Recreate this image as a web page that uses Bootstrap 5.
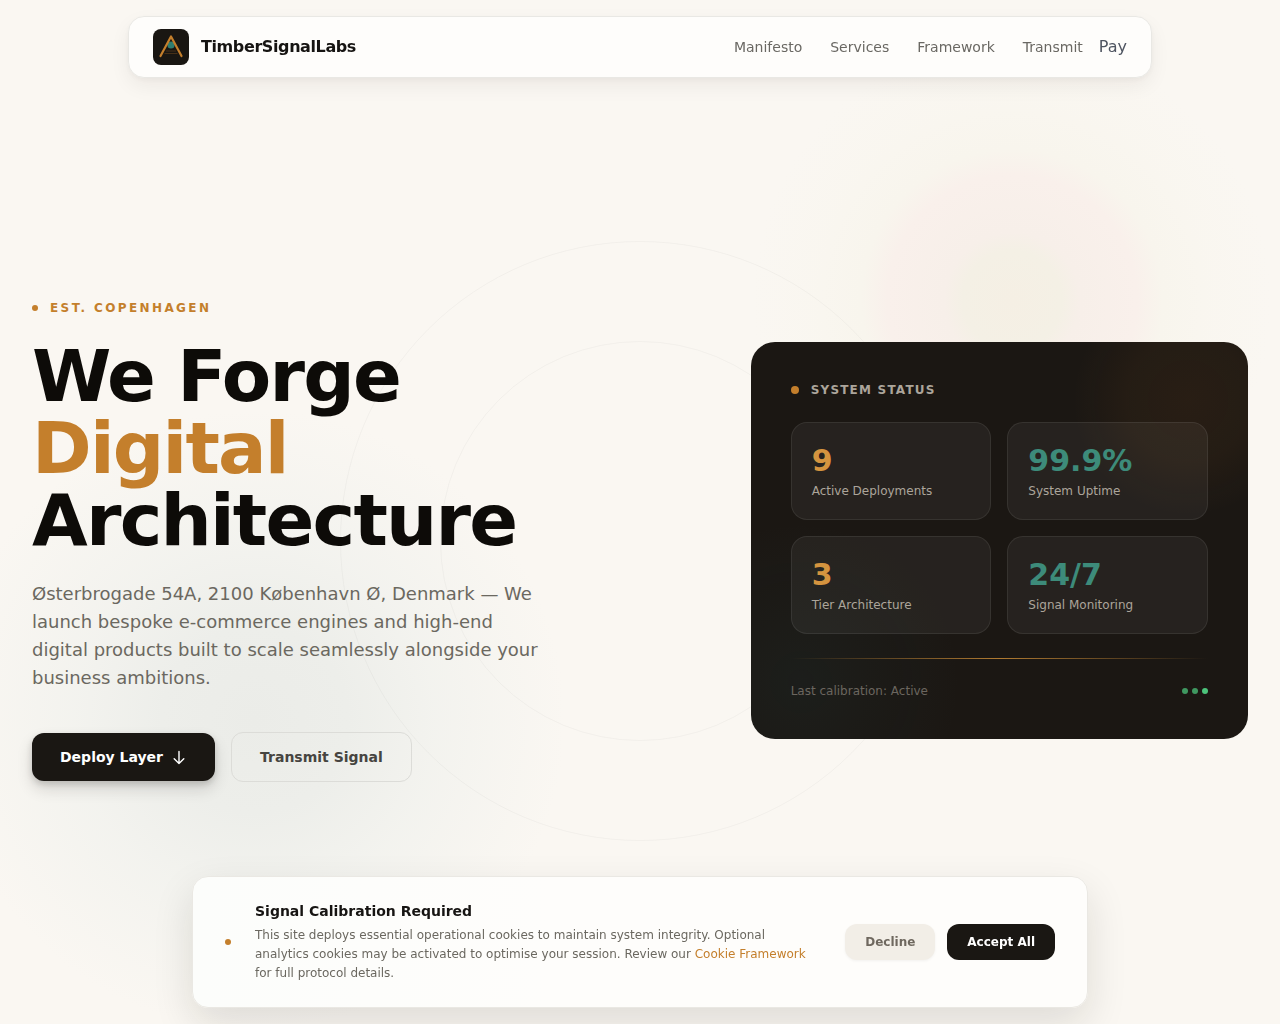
<!DOCTYPE html>
<html lang="en">
<head>
<meta charset="utf-8">
<meta name="viewport" content="width=device-width, initial-scale=1">
<title>TimberSignalLabs</title>
<link href="https://cdn.jsdelivr.net/npm/bootstrap@5.3.0/dist/css/bootstrap.min.css" rel="stylesheet">
<style>
  :root { --ink: #1a1612; --copper: #c47f2c; --cream: #faf7f2; --stone: #6b6860; }
  body { font-family: "DejaVu Sans", sans-serif; background: var(--cream); color: var(--stone); }
  .fs-12 { font-size: 12px; line-height: 16px; }
  .fs-14 { font-size: 14px; line-height: 20px; }
  .gap-12 { gap: 12px; }
  .dot-6 { width: 6px; height: 6px; border-radius: 50%; flex: none; background: var(--copper); }
  .dot-8 { width: 8px; height: 8px; border-radius: 50%; flex: none; background: var(--copper); }

  .site-bar { max-width: 1024px; padding: 12px 24px; background: #fefdfb; border: 1px solid #e9e8e4; border-radius: 16px; box-shadow: 0 8px 20px rgba(26,22,18,.06), 0 2px 6px rgba(26,22,18,.04); }
  .brand-name { color: #161412; font-size: 16px; line-height: 24px; letter-spacing: -.025em; }
  .site-links { gap: 28px; }
  .site-links a, .pay-link { color: #6a6863; text-decoration: none; }
  .pay-link { color: #4f5561; font-size: 16px; line-height: 24px; }

  .hero { padding: 57px 24px 0; overflow: hidden; }
  .glow, .ring { position: absolute; border-radius: 50%; pointer-events: none; }
  .glow-warm { width: 520px; height: 520px; right: 8px; top: 40px; background: radial-gradient(closest-side, #f5efe4 0, #f4f0e5 19%, #f7efe9 26%, #f9f0eb 48%, #f8f5ed 58%, rgba(249,246,239,.7) 78%, rgba(250,247,242,0) 100%); }
  .glow-cool { width: 620px; height: 620px; left: -55px; top: 410px; background: radial-gradient(closest-side, #ebece8 0, #edeeea 30%, rgba(240,241,237,.7) 58%, rgba(250,247,242,0) 100%); }
  .ring { left: 50%; top: 50%; transform: translate(-50%, -50%); border: 1px solid rgba(26,22,18,.035); }
  .ring-lg { width: 600px; height: 600px; }
  .ring-sm { width: 400px; height: 400px; }

  .eyebrow { color: var(--copper); letter-spacing: .2em; }
  .hero-title { font-size: 72px; line-height: 72px; letter-spacing: -.025em; color: #0d0b08; margin: 24px 0; }
  .hero-title span { color: var(--copper); }
  .hero-text { font-size: 18px; line-height: 28px; max-width: 512px; margin-bottom: 40px; }
  .btn-hero { padding: 14px 28px; border-radius: 12px; }
  .btn-ink { background: #1a1713; color: #fff; }
  .btn-raised { box-shadow: 0 8px 16px rgba(26,22,18,.14), 0 3px 6px rgba(26,22,18,.16); border: 0; }
  .btn-ghost { border: 1px solid #dcdcd8; color: #464440; }

  .status-panel { padding: 40px; border-radius: 24px; background:
      radial-gradient(circle 115px at 437px 58px, rgba(196,110,30,.08), rgba(196,115,40,.06) 50%, rgba(196,127,44,0)),
      radial-gradient(circle 160px at 50px 340px, rgba(45,120,130,.07), rgba(45,120,130,0)), #1b1713; }
  .status-title { color: #aca59b; letter-spacing: .1em; }
  .stat-tile { padding: 20px; border: 1px solid rgba(255,255,255,.08); border-radius: 16px; background: rgba(255,255,255,.05); }
  .stat-num { font-size: 30px; line-height: 36px; margin-bottom: 4px; }
  .num-amber { color: #d4943f; }
  .num-teal { color: #3d8b7a; }
  .stat-name { color: #aca59b; }
  .signal-line { height: 1px; margin: 24px 0; background: linear-gradient(90deg, rgba(196,127,44,0), #b07a31, rgba(196,127,44,0)); }
  .calibration { color: #6b665f; }
  .live { background: #4cc47b; }

  .consent { max-width: 896px; padding: 24px 32px; background: linear-gradient(90deg, #fcfdfb, #fefdfb 40%); border: 1px solid #eae8e3; border-radius: 16px; box-shadow: 0 16px 40px rgba(26,22,18,.12); }
  .consent-title { color: #161412; margin-bottom: 5px; }
  .consent-text { font-size: 12px; line-height: 19px; }
  .consent-text a { color: var(--copper); text-decoration: none; }
  .btn-consent { padding: 10px 20px; border-radius: 12px; border: 0; }
  .btn-soft { background: #f2eee7; color: #6f685f; box-shadow: 0 1px 3px rgba(26,22,18,.05); }
</style>
<script src="https://cdn.jsdelivr.net/npm/bootstrap@5.3.0/dist/js/bootstrap.bundle.min.js"></script>
</head>
<body>
<header class="fixed-top pt-3 px-3">
  <nav class="site-bar mx-auto d-flex align-items-center justify-content-between" aria-label="Main">
    <a href="#top" class="d-flex align-items-center gap-12 text-decoration-none">
      <svg width="36" height="36" viewBox="0 0 36 36" aria-hidden="true">
        <rect width="36" height="36" rx="8" fill="#191612"/>
        <path d="M13 22h10M11.500 24.500h13" stroke="#7a4d1d" stroke-width=".8" opacity=".6"/>
        <circle cx="18" cy="16" r="3.600" fill="#2e7d70"/>
        <path d="M7.500 27 18 7.500 28.500 27" fill="none" stroke="#c47f2c" stroke-width="2.200" stroke-linecap="round" stroke-linejoin="round"/>
      </svg>
      <span class="brand-name fw-bold">TimberSignalLabs</span>
    </a>
    <div class="d-flex align-items-center gap-3">
      <div class="site-links fs-14 d-flex">
        <a href="#manifesto">Manifesto</a>
        <a href="#services">Services</a>
        <a href="#framework">Framework</a>
        <a href="#transmit">Transmit</a>
      </div>
      <a class="pay-link" href="#pay">Pay</a>
    </div>
  </nav>
</header>

<main id="top" class="hero min-vh-100 d-flex position-relative">
  <div class="glow glow-warm"></div>
  <div class="glow glow-cool"></div>
  <div class="flex-grow-1 d-flex align-items-center position-relative">
    <div class="ring ring-lg"></div>
    <div class="ring ring-sm"></div>
    <div class="container-fluid px-2 position-relative">
      <div class="row gx-3 gy-5 align-items-center">
        <div class="col-lg-7">
          <div class="eyebrow fs-12 fw-bold d-flex align-items-center gap-12 text-uppercase"><span class="dot-6"></span><span>Est. Copenhagen</span></div>
          <h1 class="hero-title fw-bold">We Forge<br><span>Digital</span><br>Architecture</h1>
          <p class="hero-text">Østerbrogade 54A, 2100 København Ø, Denmark — We launch bespoke e-commerce engines and high-end digital products built to scale seamlessly alongside your business ambitions.</p>
          <div class="d-flex flex-wrap align-items-center gap-3">
            <button type="button" class="btn btn-hero btn-ink btn-raised fs-14 fw-bold d-inline-flex align-items-center gap-2">Deploy Layer
              <svg width="16" height="16" viewBox="0 0 16 16" fill="none" stroke="currentColor" stroke-width="1.400" stroke-linecap="round" stroke-linejoin="round" aria-hidden="true"><path d="M8 2.500v12M3.200 9.700 8 14.500l4.800-4.800"/></svg>
            </button>
            <button type="button" class="btn btn-hero btn-ghost fs-14 fw-bold">Transmit Signal</button>
          </div>
        </div>
        <div class="col-lg-5">
          <section class="status-panel" aria-label="System status">
            <div class="status-title fs-12 fw-bold text-uppercase d-flex align-items-center gap-12 mb-4"><span class="dot-8"></span><span>System Status</span></div>
            <div class="row g-3">
              <div class="col-6"><div class="stat-tile"><div class="stat-num num-amber fw-bold">9</div><div class="stat-name fs-12">Active Deployments</div></div></div>
              <div class="col-6"><div class="stat-tile"><div class="stat-num num-teal fw-bold">99.9%</div><div class="stat-name fs-12">System Uptime</div></div></div>
              <div class="col-6"><div class="stat-tile"><div class="stat-num num-amber fw-bold">3</div><div class="stat-name fs-12">Tier Architecture</div></div></div>
              <div class="col-6"><div class="stat-tile"><div class="stat-num num-teal fw-bold">24/7</div><div class="stat-name fs-12">Signal Monitoring</div></div></div>
            </div>
            <div class="signal-line"></div>
            <div class="d-flex align-items-center justify-content-between">
              <span class="calibration fs-12">Last calibration: Active</span>
              <span class="d-flex gap-1"><span class="dot-6 live opacity-75"></span><span class="dot-6 live opacity-75"></span><span class="dot-6 live"></span></span>
            </div>
          </section>
        </div>
      </div>
    </div>
  </div>
</main>

<div class="fixed-bottom pb-3 px-3">
  <section class="consent mx-auto d-flex align-items-center gap-4" aria-label="Cookie consent">
    <span class="dot-6"></span>
    <div class="flex-grow-1">
      <h2 class="consent-title fs-14 fw-bold">Signal Calibration Required</h2>
      <p class="consent-text mb-0">This site deploys essential operational cookies to maintain system integrity. Optional analytics cookies may be activated to optimise your session. Review our <a href="#cookies">Cookie Framework</a> for full protocol details.</p>
    </div>
    <div class="d-flex flex-shrink-0 gap-12">
      <button type="button" class="btn btn-consent btn-soft fs-12 fw-bold">Decline</button>
      <button type="button" class="btn btn-consent btn-ink fs-12 fw-bold">Accept All</button>
    </div>
  </section>
</div>
</body>
</html>
